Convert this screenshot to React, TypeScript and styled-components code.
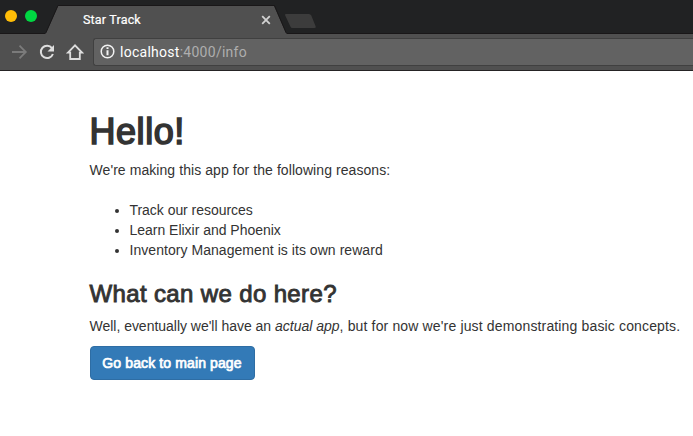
import React from "react";
import styled, { createGlobalStyle } from "styled-components";

const Global = createGlobalStyle`
  * { box-sizing: border-box; }
  body { margin: 0; background: #fff; overflow: hidden; }
`;

const Window = styled.div`
  width: 693px;
  height: 436px;
  overflow: hidden;
  background: #fff;
`;

const TabStrip = styled.div`
  display: flex;
  height: 34px;
  background: #212223;
  border-bottom: 1px solid #191718;
`;

const Lights = styled.div`
  display: flex;
  gap: 8px;
  width: 45px;
  padding: 10px 0 0 5px;
`;

const Light = styled.span<{ $color: string }>`
  flex: none;
  width: 12px;
  height: 12px;
  border-radius: 50%;
  background: ${(p) => p.$color};
`;

const Tab = styled.div`
  position: relative;
  flex: none;
  display: flex;
  justify-content: space-between;
  width: 242px;
  height: 34px;
  padding: 6px 15px 0 38px;
`;

const TabShape = styled.svg`
  position: absolute;
  inset: 0;
`;

const TabTitle = styled.span`
  position: relative;
  font: 12.5px/28px Roboto, sans-serif;
  letter-spacing: 0.18px;
  color: #fff;
  -webkit-text-stroke: 0.2px #fff;
`;

const CloseIcon = styled.svg`
  position: relative;
  margin-top: 9px;
`;

const NewTab = styled.svg`
  margin: 13px 0 0 -3px;
`;

const Toolbar = styled.div`
  display: flex;
  align-items: center;
  height: 37px;
  padding: 0 0 1px 10px;
  background: #505050;
  border-bottom: 1px solid #252324;
`;

const NavIcon = styled.svg`
  flex: none;
  width: 18px;
  height: 18px;
  margin-right: 10px;
`;

const AddressBar = styled.div`
  display: flex;
  align-items: center;
  flex: 1;
  height: 28px;
  margin-left: -1px;
  padding-left: 6px;
  background: #626262;
  border: 1px solid #404040;
  border-right: 0;
  border-radius: 3px 0 0 3px;
`;

const Url = styled.span`
  margin-left: 5px;
  font: 14px/20px Roboto, sans-serif;
  letter-spacing: 0.27px;
  color: #aeaeae;
`;

const Host = styled.span`
  color: #fff;
`;

const Page = styled.main`
  padding: 39.4px 0 0 89.5px;
  font: 14px/20px "Liberation Sans", Arial, sans-serif;
  color: #333;
  white-space: nowrap;
`;

const Title = styled.h1`
  margin: 0;
  padding-top: 2px;
  height: 49.6px;
  font-size: 36px;
  font-weight: 400;
  line-height: 39.6px;
  letter-spacing: 0.55px;
  -webkit-text-stroke: 1.6px #333;
`;

const Heading = styled.h3`
  margin: 20px 0 0;
  padding-top: 1px;
  height: 36.4px;
  font-size: 24px;
  font-weight: 400;
  line-height: 26.4px;
  letter-spacing: 0.36px;
  -webkit-text-stroke: 0.9px #333;
`;

const Text = styled.p<{ $gap: number; $track: number }>`
  margin: 0 0 ${(p) => p.$gap}px;
  letter-spacing: ${(p) => p.$track}px;
`;

const Run = styled.span<{ $track: number }>`
  letter-spacing: ${(p) => p.$track}px;
`;

const Reasons = styled.ul`
  margin: 0;
  padding: 0 0 0 40px;
`;

const Reason = styled.li<{ $track: number }>`
  letter-spacing: ${(p) => p.$track}px;
`;

const Button = styled.button`
  display: block;
  width: 165px;
  height: 34px;
  padding: 0;
  border: 1px solid #2e6da4;
  border-radius: 4px;
  background: #337ab7;
  color: #fff;
  font: 14px/20px "Liberation Sans", Arial, sans-serif;
  letter-spacing: 0.12px;
  -webkit-text-stroke: 0.7px #fff;
`;

export default function App() {
  return (
    <Window>
      <Global />
      <TabStrip>
        <Lights>
          <Light $color="#ffbd07" />
          <Light $color="#00d742" />
        </Lights>
        <Tab>
          <TabShape width="242" height="34" viewBox="0 0 242 34">
            <path d="M0 34 L1.5 32 L13 6 H229 L240.5 32 L242 34Z" fill="#505050" />
            <path d="M0 33.5 L1 32.5 L13 5.5 H229.5 L241 32.5 L242 33.5" fill="none" stroke="#191718" />
          </TabShape>
          <TabTitle>Star Track</TabTitle>
          <CloseIcon width="12" height="12" viewBox="0 0 12 12">
            <path d="M2.2 1.2 9.8 8.8M9.8 1.2 2.2 8.8" stroke="#d2d2d2" strokeWidth="1.8" />
          </CloseIcon>
        </Tab>
        <NewTab width="34" height="16" viewBox="0 0 34 16">
          <path d="M1.5 1 H25 Q26.5 1 27.3 2.5 L31.7 13.5 Q32 15 30.5 15 H8.5 Q7 15 6.4 13.5 L1 2Z" fill="#3c3c3c" />
        </NewTab>
      </TabStrip>
      <Toolbar>
        <NavIcon viewBox="0 0 18 18">
          <path d="M2 9H15.5M9.5 2.7 15.8 9 9.5 15.3" fill="none" stroke="#7b7b7b" strokeWidth="1.8" />
        </NavIcon>
        <NavIcon viewBox="0 0 18 18">
          <path d="M14 5.1A6.2 6.2 0 1 0 14.9 11" fill="none" stroke="#dedede" strokeWidth="2" />
          <path d="M16 2V8.5H9.5Z" fill="#dedede" />
        </NavIcon>
        <NavIcon viewBox="0 0 18 18">
          <path d="M2 9.6 9 2.4 16 9.6H13.8V16H4.2V9.6Z" fill="none" stroke="#dedede" strokeWidth="1.8" />
        </NavIcon>
        <AddressBar>
          <svg width="15" height="15" viewBox="0 0 15 15">
            <circle cx="7.5" cy="7.5" r="6.3" fill="none" stroke="#f2f2f2" strokeWidth="1.5" />
            <path d="M7.5 3.3V5.1M7.5 6.3V11.3" stroke="#f2f2f2" strokeWidth="2" />
          </svg>
          <Url><Host>localhost</Host>:4000/info</Url>
        </AddressBar>
      </Toolbar>
      <Page>
        <Title>Hello!</Title>
        <Text $gap={20} $track={0.07}>We're making this app for the following reasons:</Text>
        <Reasons>
          <Reason $track={-0.04}>Track our resources</Reason>
          <Reason $track={-0.02}>Learn Elixir and Phoenix</Reason>
          <Reason $track={0.05}>Inventory Management is its own reward</Reason>
        </Reasons>
        <Heading>What can we do here?</Heading>
        <Text $gap={10} $track={0}>
          <Run $track={-0.02}>Well, eventually we'll have an </Run>
          <em>actual app</em>
          <Run $track={0.15}>, but for now we're just demonstrating basic concepts.</Run>
        </Text>
        <Button>Go back to main page</Button>
      </Page>
    </Window>
  );
}
